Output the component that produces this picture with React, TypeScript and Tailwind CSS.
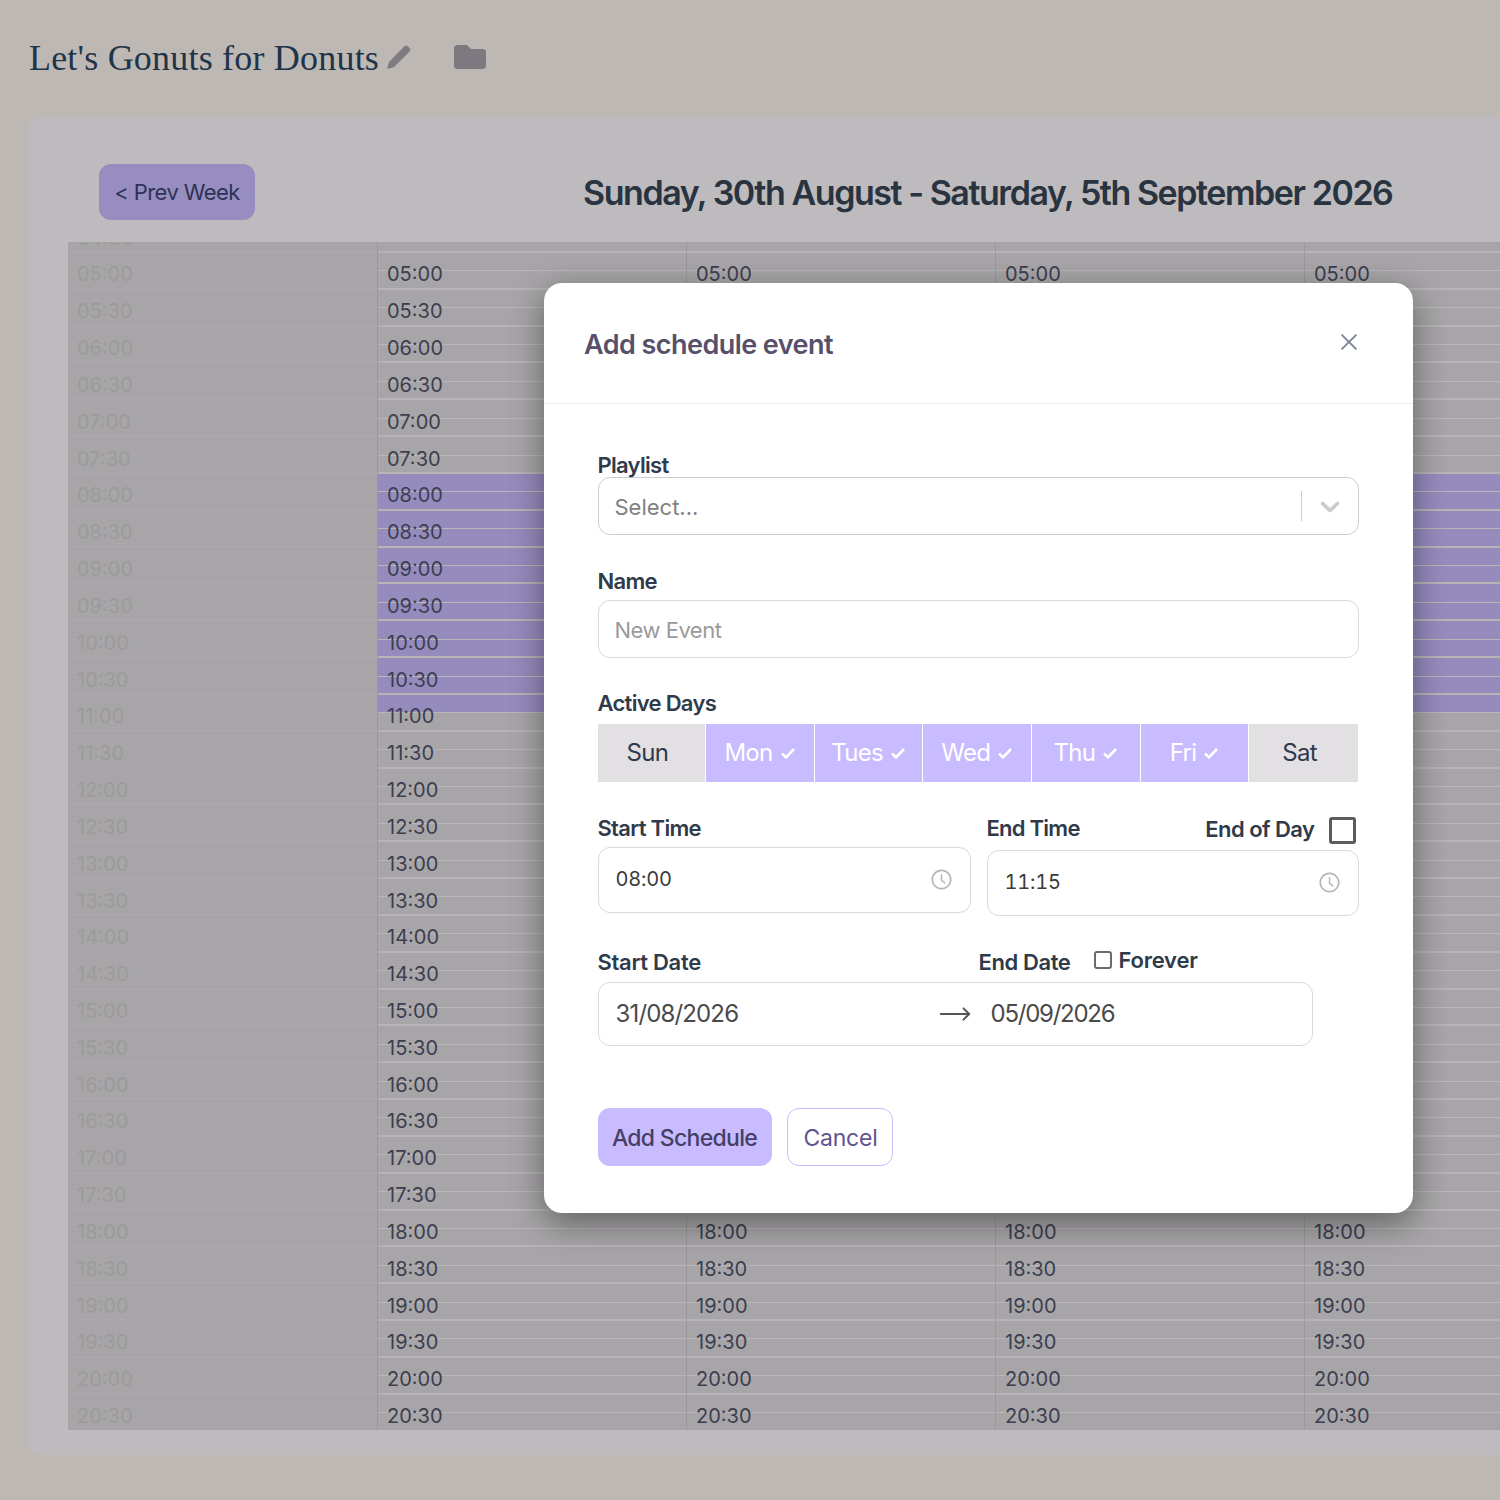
import { FaFolder } from "react-icons/fa";
import { AiOutlineClockCircle, AiOutlineClose } from "react-icons/ai";
import { MoveRight } from "lucide-react";

const times = [
  "04:30", "05:00", "05:30", "06:00", "06:30", "07:00", "07:30", "08:00", "08:30", "09:00", "09:30",
  "10:00", "10:30", "11:00", "11:30", "12:00", "12:30", "13:00", "13:30", "14:00", "14:30", "15:00",
  "15:30", "16:00", "16:30", "17:00", "17:30", "18:00", "18:30", "19:00", "19:30", "20:00", "20:30",
];

const days = [
  { name: "Sun", on: false },
  { name: "Mon", on: true },
  { name: "Tues", on: true },
  { name: "Wed", on: true },
  { name: "Thu", on: true },
  { name: "Fri", on: true },
  { name: "Sat", on: false },
];

const Cell = ({ time, muted }: { time: string; muted: boolean }) => {
  const full = !muted && time >= "08:00" && time <= "10:30";
  const half = !muted && time === "11:00";
  return (
    <div
      className={`relative flex h-[36.84px] items-center border-t-2 pl-[9px] pt-[8px] text-[20px] ${
        muted ? "border-[#aaa8aa] text-[#9c9a9c]" : "border-[#b6b4b6] text-[#3c3e50]"
      } ${full ? "bg-[#958bbd]" : ""}`}
    >
      {half && <div className="absolute inset-x-0 top-0 h-1/2 bg-[#958bbd]" />}
      <div className={`absolute inset-x-0 top-1/2 h-px ${muted ? "bg-[#a9a7a9]" : "bg-[#b8b6b8]"}`} />
      {(muted || time !== "04:30") && <span className="relative">{time}</span>}
    </div>
  );
};

const Column = ({ muted }: { muted?: boolean }) => (
  <div className={`w-[309px] shrink-0 bg-[#a7a5a7] ${muted ? "" : "border-l border-[#9a989a]"}`}>
    <div className="mt-[-27.84px]">
      {times.map((t) => (
        <Cell key={t} time={t} muted={!!muted} />
      ))}
    </div>
  </div>
);

const Label = ({ children, className = "" }: { children: React.ReactNode; className?: string }) => (
  <div className={`text-[22px] font-semibold leading-[26px] text-[#2f3a4a] ${className || ""}`}>{children}</div>
);

const TimeInput = ({ value }: { value: string }) => (
  <div className="flex h-[66px] items-center justify-between rounded-[12px] border border-[#d9d9d9] bg-white pl-[17px] pr-[17px] text-[20px] tracking-[-0.2px] text-[#3b3b3b] tabular-nums">
    <span className="mb-[3px]">{value}</span>
    <AiOutlineClockCircle className="mb-[1px] text-[23px] text-[#b5b5b5]" />
  </div>
);

export default function App() {
  return (
    <div className="relative h-[1500px] w-[1500px] overflow-hidden bg-[#bdb8b4] font-['Inter',sans-serif]">
      <div className="flex h-[117px] items-center pb-[2px] pl-[29px]">
        <h1 className="font-['Liberation_Serif',serif] text-[36px] font-normal leading-none tracking-[0.2px] text-[#1f3448]">
          Let's Gonuts for Donuts
        </h1>
        <svg viewBox="0 0 24 24" className="ml-[7px] mb-[2px] h-[26px] w-[26px] fill-[#7e7c80]">
          <path d="M1 23l1.6-6.2L16.8 2.4a2.6 2.6 0 0 1 3.7 0l1.1 1.1a2.6 2.6 0 0 1 0 3.7L7.2 21.4z" />
        </svg>
        <FaFolder className="ml-[42px] mb-[2px] text-[32px] text-[#7c7a80]" />
      </div>

      <div className="ml-[28px] h-[1338px] w-[1600px] rounded-[14px] bg-[#bdbbbd] pl-[40px] pt-[47px]">
        <div className="flex h-[78px] items-start pl-[31px]">
          <button className="flex h-[56px] w-[156px] items-center justify-center rounded-[12px] bg-[#978dc0] text-[22px] tracking-[-0.6px] text-[#2d3354]">
            &lt; Prev Week
          </button>
          <h2 className="ml-[328px] mt-[8px] whitespace-nowrap text-[34px] font-semibold leading-[42px] tracking-[-1.45px] text-[#2a3340]">
            Sunday, 30th August - Saturday, 5th September 2026
          </h2>
        </div>
        <div className="flex h-[1188px] overflow-hidden">
          <Column muted />
          <Column />
          <Column />
          <Column />
          <Column />
        </div>
      </div>

      <div className="absolute left-[544px] top-[283px] h-[930px] w-[869px] rounded-[18px] bg-white shadow-[0_10px_34px_rgba(0,0,0,0.42)]">
        <div className="flex h-[121px] items-center justify-between border-b border-[#f0f0f0] pl-[40px] pr-[52px]">
          <h3 className="mt-[4px] text-[27px] font-semibold tracking-[-0.55px] text-[#57506b]">Add schedule event</h3>
          <AiOutlineClose className="mb-[2px] text-[24px] text-[#7d8596]" />
        </div>

        <div className="pl-[53.5px] pr-[54px] pt-[48px]">
          <Label className="-mb-[1px] tracking-[-0.7px]">Playlist</Label>
          <div className="flex h-[58px] items-center rounded-[12px] border border-[#cccccc] pl-[16px] text-[22px] text-[#808080]">
            <span className="flex-1 pt-[2px]">Select...</span>
            <div className="h-[30px] w-px bg-[#cccccc]" />
            <svg viewBox="0 0 20 20" className="mx-[12px] h-[32px] w-[32px] fill-[#cccccc]">
              <path d="M4.516 7.548c0.436-0.446 1.043-0.481 1.576 0l3.908 3.747 3.908-3.747c0.533-0.481 1.141-0.446 1.574 0 0.436 0.445 0.408 1.197 0 1.615-0.406 0.418-4.695 4.502-4.695 4.502-0.217 0.223-0.502 0.335-0.787 0.335s-0.57-0.112-0.789-0.335c0 0-4.287-4.084-4.695-4.502s-0.436-1.17 0-1.615z" />
            </svg>
          </div>

          <Label className="mb-[6px] mt-[33px] tracking-[-0.7px]">Name</Label>
          <div className="flex h-[58px] items-center rounded-[12px] border border-[#d9d9d9] pl-[16px] pt-[2px] text-[22px] tracking-[-0.5px] text-[#9a9a9a]">
            New Event
          </div>

          <Label className="mb-[8px] mt-[32px] tracking-[-0.7px]">Active Days</Label>
          <div className="grid h-[58px] w-[760.5px] grid-cols-7">
            {days.map((d) => (
              <div
                key={d.name}
                className={`flex items-center justify-center gap-[7px] border-r border-white text-[24px] tracking-[-0.7px] last:border-r-0 ${
                  d.on ? "bg-[#c8bbff] text-white" : "bg-[#e2e0e3] pr-[8px] text-[#2f3a4a]"
                }`}
              >
                {d.name}
                {d.on && (
                  <svg viewBox="0 0 16 16" className="h-[16px] w-[16px] fill-none stroke-white stroke-[2.6]">
                    <path d="M2 8.5l4 4 8-8.5" />
                  </svg>
                )}
              </div>
            ))}
          </div>

          <div className="mt-[32px] flex gap-[16px]">
            <div className="w-[373px]">
              <Label className="mb-[6px] mt-[1px] tracking-[-0.7px]">Start Time</Label>
              <TimeInput value="08:00" />
            </div>
            <div className="w-[372px]">
              <div className="mb-[7px] flex h-[29px] items-center justify-between pr-[3px]">
                <Label className="mb-[1px] tracking-[-0.75px]">End Time</Label>
                <div className="mt-[4px] flex items-center gap-[14px]">
                  <Label className="mb-[4px] tracking-[-0.55px]">End of Day</Label>
                  <div className="h-[27px] w-[27px] rounded-[3px] border-[3px] border-[#5c5c5f]" />
                </div>
              </div>
              <TimeInput value="11:15" />
            </div>
          </div>

          <div className="mt-[27px] flex h-[34px] items-center">
            <Label className="w-[381px] pt-[4px] tracking-[-0.3px]">Start Date</Label>
            <Label className="pt-[4px] tracking-[-0.4px]">End Date</Label>
            <div className="ml-[24px] h-[18px] w-[18px] rounded-[3px] border-2 border-[#6a6a6d]" />
            <Label className="ml-[6px] tracking-[-0.2px]">Forever</Label>
          </div>
          <div className="mt-[5px] flex h-[64px] w-[715px] items-center rounded-[12px] border border-[#d9d9d9] pl-[17px] text-[24px] tracking-[-0.85px] text-[#4a4a4a]">
            <span className="w-[322px]">31/08/2026</span>
            <MoveRight size={34} strokeWidth={1.4} className="text-[#555555]" />
            <span className="ml-[19px] tracking-[-1.25px]">05/09/2026</span>
          </div>

          <div className="mt-[62px] flex gap-[15px]">
            <button className="h-[58px] w-[174px] rounded-[12px] bg-[#c8bbff] pt-[2px] text-[23px] font-medium tracking-[-0.7px] text-[#453f66]">
              Add Schedule
            </button>
            <button className="h-[58px] w-[106px] rounded-[12px] border border-[#c8bbff] pl-[2px] pt-[2px] text-[23px] tracking-[-0.2px] text-[#5f5490]">
              Cancel
            </button>
          </div>
        </div>
      </div>
    </div>
  );
}
